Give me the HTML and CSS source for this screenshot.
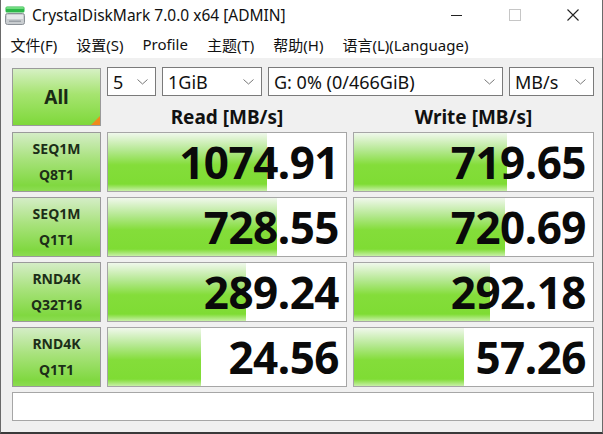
FILE: index.html
```html
<!DOCTYPE html>
<html lang="zh">
<head>
<meta charset="utf-8">
<title>CrystalDiskMark</title>
<link rel="stylesheet" href="styles.css">
</head>
<body>
<div class="window">
  <div class="titlebar">
    <svg class="app-icon" width="20" height="19" viewBox="0 0 20 19">
      <rect x="0.5" y="0.5" width="19" height="6" rx="1.5" fill="#2db84a"/>
      <rect x="1" y="1" width="18" height="2" rx="1" fill="#6fdc7e"/>
      <rect x="0.5" y="7.5" width="19" height="11" rx="2" fill="#c9cdd0" stroke="#8a9096"/>
      <rect x="2" y="9" width="16" height="4" fill="#e6e8ea"/>
      <rect x="4" y="14.5" width="12" height="1.5" fill="#9aa0a6"/>
    </svg>
    <span class="title">CrystalDiskMark 7.0.0 x64 [ADMIN]</span>
    <div class="controls">
      <span class="ctl"><svg width="12" height="12" viewBox="0 0 12 12"><line x1="0" y1="6.5" x2="11" y2="6.5" stroke="#222" stroke-width="1"/></svg></span>
      <span class="ctl"><svg width="12" height="12" viewBox="0 0 12 12"><rect x="0.5" y="0.5" width="11" height="11" fill="none" stroke="#c6c6c6" stroke-width="1"/></svg></span>
      <span class="ctl"><svg width="12" height="12" viewBox="0 0 12 12"><path d="M0.5 0.5 L11.5 11.5 M11.5 0.5 L0.5 11.5" stroke="#222" stroke-width="1.1"/></svg></span>
    </div>
  </div>
  <div class="menubar">
    <span class="menu">文件(F)</span>
    <span class="menu">设置(S)</span>
    <span class="menu">Profile</span>
    <span class="menu">主题(T)</span>
    <span class="menu">帮助(H)</span>
    <span class="menu">语言(L)(Language)</span>
  </div>
  <div class="content">
    <div class="grid">
      <div class="all-btn">All<span class="corner"></span></div>
      <div class="top">
        <div class="selects">
          <div class="select"><span>5</span><svg class="chev" width="11" height="6" viewBox="0 0 11 6"><path d="M0.5 0.5 L5.5 5 L10.5 0.5" fill="none" stroke="#777" stroke-width="1"/></svg></div>
          <div class="select"><span>1GiB</span><svg class="chev" width="11" height="6" viewBox="0 0 11 6"><path d="M0.5 0.5 L5.5 5 L10.5 0.5" fill="none" stroke="#777" stroke-width="1"/></svg></div>
          <div class="select"><span>G: 0% (0/466GiB)</span><svg class="chev" width="11" height="6" viewBox="0 0 11 6"><path d="M0.5 0.5 L5.5 5 L10.5 0.5" fill="none" stroke="#777" stroke-width="1"/></svg></div>
          <div class="select"><span>MB/s</span><svg class="chev" width="11" height="6" viewBox="0 0 11 6"><path d="M0.5 0.5 L5.5 5 L10.5 0.5" fill="none" stroke="#777" stroke-width="1"/></svg></div>
        </div>
        <div class="heads">
          <span class="head">Read [MB/s]</span>
          <span class="head">Write [MB/s]</span>
        </div>
      </div>

      <div class="test"><span>SEQ1M</span><span>Q8T1</span></div>
      <div class="cell"><div class="bar" style="width:67%"></div><span class="val">1074.91</span></div>
      <div class="cell"><div class="bar" style="width:64%"></div><span class="val">719.65</span></div>

      <div class="test"><span>SEQ1M</span><span>Q1T1</span></div>
      <div class="cell"><div class="bar" style="width:71%"></div><span class="val">728.55</span></div>
      <div class="cell"><div class="bar" style="width:63%"></div><span class="val">720.69</span></div>

      <div class="test"><span>RND4K</span><span>Q32T16</span></div>
      <div class="cell"><div class="bar" style="width:58%"></div><span class="val">289.24</span></div>
      <div class="cell"><div class="bar" style="width:57%"></div><span class="val">292.18</span></div>

      <div class="test"><span>RND4K</span><span>Q1T1</span></div>
      <div class="cell"><div class="bar" style="width:39%"></div><span class="val">24.56</span></div>
      <div class="cell"><div class="bar" style="width:46%"></div><span class="val">57.26</span></div>

      <div class="status"></div>
    </div>
  </div>
</div>
</body>
</html>
```
FILE: styles.css
```css
* { box-sizing: border-box; }
html, body { margin: 0; padding: 0; }
body {
  width: 603px;
  height: 434px;
  overflow: hidden;
  font-family: "Noto Sans", "Noto Sans CJK SC", sans-serif;
  color: #000;
  background: #fff;
}
.window {
  width: 603px;
  height: 434px;
  display: flex;
  flex-direction: column;
  border-left: 1px solid #6a6a6a;
  border-right: 1px solid #6a6a6a;
  border-bottom: 2px solid #3a3a3a;
  background: #f0f0f0;
}
.titlebar {
  height: 30px;
  flex: none;
  display: flex;
  align-items: center;
  background: #fff;
  padding-left: 4px;
}
.app-icon { flex: none; margin-top: 1px; }
.title {
  margin-left: 7px;
  font-size: 15.5px;
  color: #111;
  white-space: nowrap;
}
.controls {
  margin-left: auto;
  display: flex;
  height: 30px;
}
.ctl {
  width: 58px;
  display: flex;
  align-items: center;
  justify-content: center;
}
.menubar {
  height: 28px;
  flex: none;
  display: flex;
  align-items: center;
  background: #fff;
  padding-left: 0;
  font-size: 15px;
  color: #111;
}
.menu {
  padding: 0 9.5px;
  white-space: nowrap;
}
.content {
  flex: 1;
  padding: 10px 0 0 11px;
}
.grid {
  display: grid;
  grid-template-columns: 89px 240px 241px;
  grid-template-rows: 59px 60px 60px 60px 60px 29px;
  column-gap: 6px;
  row-gap: 5px;
}
.all-btn {
  position: relative;
  border: 1px solid #9a9a9a;
  background: linear-gradient(to bottom, #d6f0c4 0%, #a6e470 45%, #7ed83a 100%);
  display: flex;
  align-items: center;
  justify-content: center;
  font-weight: 700;
  font-size: 19px;
  color: #1a2a14;
  height: 58px;
}
.corner {
  position: absolute;
  right: 0;
  bottom: 0;
  width: 0;
  height: 0;
  border-style: solid;
  border-width: 0 0 9px 9px;
  border-color: transparent transparent #f08a1c transparent;
}
.top {
  grid-column: 2 / 4;
  display: flex;
  flex-direction: column;
}
.selects {
  display: grid;
  grid-template-columns: 49px 100px 1fr 85px;
  column-gap: 6px;
  height: 30px;
  margin-top: -1px;
}
.select {
  border: 1px solid #7a7a7a;
  background: #fff;
  display: flex;
  align-items: center;
  padding: 0 7px 0 5px;
  font-size: 18px;
  color: #111;
  white-space: nowrap;
}
.select span { flex: 1; }
.chev { flex: none; }
.heads {
  display: grid;
  grid-template-columns: 240px 241px;
  column-gap: 6px;
  margin-top: 11px;
}
.head {
  text-align: center;
  font-weight: 700;
  font-size: 19px;
  line-height: 20px;
  color: #111;
}
.test {
  border: 1px solid #9a9a9a;
  background: linear-gradient(to bottom, #d4edc6 0%, #a8e27c 45%, #80d840 90%, #8cdc52 100%);
  display: flex;
  flex-direction: column;
  align-items: center;
  justify-content: center;
  font-weight: 700;
  font-size: 14px;
  line-height: 26px;
  color: #1c2e18;
}
.cell {
  position: relative;
  border: 1px solid #a6a6a6;
  background: #fff;
  display: flex;
  align-items: center;
  justify-content: flex-end;
  padding-right: 7px;
  overflow: hidden;
}
.bar {
  position: absolute;
  left: 0;
  top: 0;
  bottom: 0;
  background: linear-gradient(to bottom, #f0f8ec 0%, #b4e890 30%, #84dd3a 55%, #7fdc34 88%, #c8f0a8 100%);
}
.val {
  position: relative;
  font-weight: 700;
  font-size: 44px;
  letter-spacing: -0.5px;
  line-height: 1;
  color: #0a0a0a;
}
.status {
  grid-column: 1 / 4;
  border: 1px solid #a6a6a6;
  background: #fff;
}
```
